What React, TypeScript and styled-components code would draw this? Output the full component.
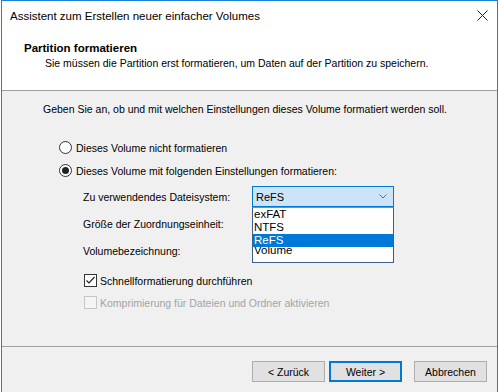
import React from 'react';
import styled, { createGlobalStyle } from 'styled-components';

const GlobalStyle = createGlobalStyle`
  html, body { margin: 0; padding: 0; background: #ffffff; }
  body {
    font-family: "Liberation Sans", Arial, sans-serif;
    font-size: 10.5px;
    color: #000;
  }
  #root { width: 499px; height: 392px; overflow: hidden; }
`;

const Window = styled.div`
  box-sizing: border-box;
  width: 497px;
  height: 392px;
  margin-left: 1px;
  border: 1px solid #1a82d6;
  border-bottom: none;
  display: flex;
  flex-direction: column;
  background: #f0f0f0;
`;

const TitleBar = styled.div`
  height: 29px;
  flex: none;
  background: #fff;
  display: flex;
  align-items: center;
  justify-content: space-between;
  padding: 0 9px 0 8px;
  font-size: 11.5px;
  color: #000;
`;

const CloseIcon = styled.svg`
  width: 11px;
  height: 11px;
  display: block;
`;

const Header = styled.div`
  height: 61px;
  flex: none;
  box-sizing: border-box;
  background: #fff;
  border-bottom: 1px solid #a0a0a0;
  padding: 11px 0 0 22px;
`;

const HeaderTitle = styled.div`
  font-weight: bold;
  font-size: 11.5px;
  line-height: 14px;
`;

const HeaderSubtitle = styled.div`
  margin: 2px 0 0 21px;
  line-height: 13px;
`;

const Body = styled.div`
  flex: 1;
  padding: 12px 0 0 41px;
  display: flex;
  flex-direction: column;
`;

const Intro = styled.div`
  line-height: 13px;
`;

const OptionRow = styled.label<{ $indent: number; $top: number; $disabled?: boolean }>`
  display: flex;
  align-items: center;
  height: 13px;
  margin: ${p => p.$top}px 0 0 ${p => p.$indent}px;
  color: ${p => (p.$disabled ? '#a3a3a3' : '#000')};
  gap: 3px;
`;

const Radio = styled.span<{ $checked?: boolean }>`
  box-sizing: border-box;
  width: 13px;
  height: 13px;
  border-radius: 50%;
  border: 1px solid #333;
  background: #fff;
  display: flex;
  align-items: center;
  justify-content: center;
  margin-right: 1px;
  &::after {
    content: '';
    width: 7px;
    height: 7px;
    border-radius: 50%;
    background: ${p => (p.$checked ? '#222' : 'transparent')};
  }
`;

const Checkbox = styled.span<{ $disabled?: boolean }>`
  box-sizing: border-box;
  width: 13px;
  height: 13px;
  border: 1px solid ${p => (p.$disabled ? '#c6c6c6' : '#333')};
  background: ${p => (p.$disabled ? '#f4f4f4' : '#fff')};
  display: flex;
  align-items: center;
  justify-content: center;
`;

const FormGrid = styled.div`
  display: grid;
  grid-template-columns: 169px 142px;
  grid-auto-rows: 21px;
  row-gap: 6px;
  margin: 9px 0 0 40px;
`;

const FieldLabel = styled.div`
  display: flex;
  align-items: center;
`;

const ComboWrap = styled.div`
  position: relative;
`;

const Combo = styled.div<{ $active?: boolean }>`
  box-sizing: border-box;
  height: 21px;
  border: 1px solid ${p => (p.$active ? '#0078d7' : '#adadad')};
  background: ${p => (p.$active ? '#cce4f7' : '#e5e5e5')};
  display: flex;
  align-items: center;
  justify-content: space-between;
  padding: 0 6px 0 3px;
  font-size: 11px;
`;

const TextBox = styled.div`
  box-sizing: border-box;
  height: 21px;
  border: 1px solid #7a7a7a;
  background: #fff;
`;

const DropList = styled.div`
  position: absolute;
  top: 100%;
  left: 0;
  width: 100%;
  height: 56px;
  box-sizing: border-box;
  border: 1px solid #3d5f86;
  border-top: 1px solid #7a8ea8;
  background: #fff;
  z-index: 5;
  display: flex;
  flex-direction: column;
  overflow: hidden;
`;

const DropItem = styled.div<{ $selected?: boolean; $overlap?: number }>`
  position: relative;
  z-index: ${p => (p.$selected ? 2 : 1)};
  height: 13px;
  line-height: 13px;
  padding-left: 1px;
  font-size: 11.5px;
  margin-top: ${p => (p.$overlap ? -p.$overlap : 0)}px;
  background: ${p => (p.$selected ? '#0078d7' : 'transparent')};
  color: ${p => (p.$selected ? '#fff' : '#000')};
`;

const Footer = styled.div`
  flex: none;
  height: 46px;
  box-sizing: border-box;
  border-top: 1px solid #a0a0a0;
  padding: 14px 10px 0 0;
  display: flex;
  justify-content: flex-end;
  align-items: flex-start;
`;

const Button = styled.button<{ $default?: boolean; $gap?: number }>`
  box-sizing: border-box;
  width: 73px;
  height: 21px;
  margin-left: ${p => p.$gap ?? 0}px;
  font-family: "Liberation Sans", Arial, sans-serif;
  font-size: 10.5px;
  color: #000;
  background: #e1e1e1;
  border: ${p => (p.$default ? '2px solid #0078d7' : '1px solid #adadad')};
  padding: 0;
  display: flex;
  align-items: center;
  justify-content: center;
`;

export default function App() {
  return (
    <>
      <GlobalStyle />
      <Window>
        <TitleBar>
          <span>Assistent zum Erstellen neuer einfacher Volumes</span>
          <CloseIcon viewBox="0 0 11 11">
            <path d="M0.5 0.5 L10.5 10.5 M10.5 0.5 L0.5 10.5" stroke="#222" strokeWidth="1" fill="none" />
          </CloseIcon>
        </TitleBar>
        <Header>
          <HeaderTitle>Partition formatieren</HeaderTitle>
          <HeaderSubtitle>
            Sie müssen die Partition erst formatieren, um Daten auf der Partition zu speichern.
          </HeaderSubtitle>
        </Header>
        <Body>
          <Intro>Geben Sie an, ob und mit welchen Einstellungen dieses Volume formatiert werden soll.</Intro>
          <OptionRow $indent={16} $top={25}>
            <Radio />
            Dieses Volume nicht formatieren
          </OptionRow>
          <OptionRow $indent={16} $top={10}>
            <Radio $checked />
            Dieses Volume mit folgenden Einstellungen formatieren:
          </OptionRow>
          <FormGrid>
            <FieldLabel>Zu verwendendes Dateisystem:</FieldLabel>
            <ComboWrap>
              <Combo $active>
                <span>ReFS</span>
                <svg width="8" height="5" viewBox="0 0 8 5">
                  <path d="M0.5 0.5 L4 4 L7.5 0.5" stroke="#6b6b6b" strokeWidth="1" fill="none" />
                </svg>
              </Combo>
              <DropList>
                <DropItem>exFAT</DropItem>
                <DropItem>NTFS</DropItem>
                <DropItem $selected>ReFS</DropItem>
                <DropItem $overlap={3}>Volume</DropItem>
              </DropList>
            </ComboWrap>
            <FieldLabel>Größe der Zuordnungseinheit:</FieldLabel>
            <Combo />
            <FieldLabel>Volumebezeichnung:</FieldLabel>
            <TextBox />
          </FormGrid>
          <OptionRow $indent={41} $top={13}>
            <Checkbox>
              <svg width="11" height="11" viewBox="0 0 11 11">
                <path d="M1.5 5.5 L4 8 L9.5 2" stroke="#222" strokeWidth="1.2" fill="none" />
              </svg>
            </Checkbox>
            Schnellformatierung durchführen
          </OptionRow>
          <OptionRow $indent={41} $top={9} $disabled>
            <Checkbox $disabled />
            Komprimierung für Dateien und Ordner aktivieren
          </OptionRow>
        </Body>
        <Footer>
          <Button>&lt; Zurück</Button>
          <Button $default $gap={4}>Weiter &gt;</Button>
          <Button $gap={12}>Abbrechen</Button>
        </Footer>
      </Window>
    </>
  );
}
